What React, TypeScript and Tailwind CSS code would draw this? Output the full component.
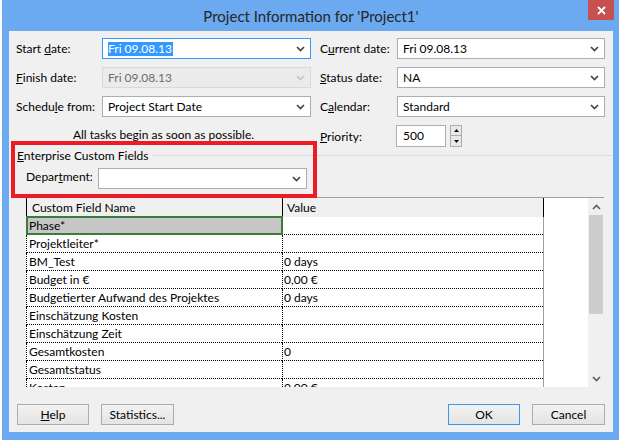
import type { ReactNode } from 'react'

const Chevron = ({ muted = false }: { muted?: boolean }) => (
  <svg width="9" height="6" viewBox="0 0 9 6" className="shrink-0">
    <path d="M1 1 L4.5 4.5 L8 1" fill="none" stroke={muted ? '#C4C4C4' : '#444444'} strokeWidth="1.7" />
  </svg>
)

const Label = ({ children, className = '' }: { children: ReactNode; className?: string }) => (
  <div className={`shrink-0 leading-[15px] ${className}`}>{children}</div>
)

const Combo = ({
  children,
  className = '',
  focused = false,
  disabled = false,
}: {
  children?: ReactNode
  className?: string
  focused?: boolean
  disabled?: boolean
}) => (
  <div
    className={`flex h-[21px] shrink-0 items-center border pl-[5px] pr-[5px] ${
      focused
        ? 'border-[#3399FF] bg-white'
        : disabled
          ? 'border-[#D9D9D9] bg-[#EBEBEB] text-[#6D6D6D]'
          : 'border-[#ABADB3] bg-white'
    } ${className}`}
  >
    <div className="min-h-[15px] flex-1 truncate leading-[15px]">{children}</div>
    <Chevron muted={disabled} />
  </div>
)

const Button = ({ children, className = '' }: { children: ReactNode; className?: string }) => (
  <div
    className={`flex h-[21px] shrink-0 items-center justify-center border bg-linear-to-b from-[#F2F2F2] to-[#E4E4E4] ${className}`}
  >
    {children}
  </div>
)

const rows = [
  { name: 'Phase*', value: '' },
  { name: 'Projektleiter*', value: '' },
  { name: 'BM_Test', value: '0 days' },
  { name: 'Budget in €', value: '0,00 €' },
  { name: 'Budgetierter Aufwand des Projektes', value: '0 days' },
  { name: 'Einschätzung Kosten', value: '' },
  { name: 'Einschätzung Zeit', value: '' },
  { name: 'Gesamtkosten', value: '0' },
  { name: 'Gesamtstatus', value: '' },
  { name: 'Kosten', value: '0,00 €' },
]

const App = () => {
  return (
    <div className="h-[443px] w-[621px] overflow-hidden bg-white font-['Lato'] text-[12px] text-black">
      <div className="ml-[2px] flex h-[440px] w-[617px] flex-col bg-[#6BA9F0] pl-[7px] pr-[6px] pb-[8px]">
        {/* Title bar */}
        <div className="relative flex h-[31px] shrink-0 items-center justify-center pt-px text-[15px] text-[#262626]">
          Project Information for 'Project1'
          <div className="absolute right-[-1px] top-0 flex h-[20px] w-[26px] items-center justify-center bg-[#C75050]">
            <svg width="9" height="9" viewBox="0 0 9 9">
              <path d="M1 1 L8 8 M8 1 L1 8" stroke="white" strokeWidth="1.8" />
            </svg>
          </div>
        </div>

        {/* Dialog body */}
        <div className="relative flex flex-1 flex-col bg-[#F0F0F0]">
          <div className="flex flex-col gap-[8px] px-[7px] pt-[7px]">
            <div className="flex h-[21px] items-center">
              <Label className="w-[86px]">
                Start <span className="underline">d</span>ate:
              </Label>
              <Combo className="w-[209px]" focused>
                <span className="ml-[-1px] inline-block bg-[#3399FF] px-px leading-[14px] text-white">Fri 09.08.13</span>
              </Combo>
              <Label className="ml-[9px] w-[77px]">
                C<span className="underline">u</span>rrent date:
              </Label>
              <Combo className="w-[208px]">Fri 09.08.13</Combo>
            </div>
            <div className="flex h-[21px] items-center">
              <Label className="w-[86px]">
                <span className="underline">F</span>inish date:
              </Label>
              <Combo className="w-[209px]" disabled>
                Fri 09.08.13
              </Combo>
              <Label className="ml-[9px] w-[77px]">
                <span className="underline">S</span>tatus date:
              </Label>
              <Combo className="w-[208px]">NA</Combo>
            </div>
            <div className="flex h-[21px] items-center">
              <Label className="w-[86px]">
                Schedu<span className="underline">l</span>e from:
              </Label>
              <Combo className="w-[209px]">Project Start Date</Combo>
              <Label className="ml-[9px] w-[77px]">
                C<span className="underline">a</span>lendar:
              </Label>
              <Combo className="w-[208px]">Standard</Combo>
            </div>
            <div className="flex h-[22px] items-center">
              <div className="w-[295px] pb-[3px] text-center">All tasks begin as soon as possible.</div>
              <Label className="ml-[9px] w-[76px]">
                <span className="underline">P</span>riority:
              </Label>
              <div className="flex h-[22px] w-[50px] items-center border border-[#ABADB3] bg-white pl-[6px]">500</div>
              <div className="ml-[4px] flex h-[22px] w-[12px] flex-col">
                <div className="flex h-[11px] items-center justify-center border border-[#ACACAC] bg-[#E9E9E9]">
                  <svg width="5" height="3" viewBox="0 0 5 3">
                    <path d="M0 3 L2.5 0 L5 3Z" fill="#111" />
                  </svg>
                </div>
                <div className="mt-[-1px] flex h-[12px] items-center justify-center border border-[#ACACAC] bg-[#E9E9E9]">
                  <svg width="5" height="3" viewBox="0 0 5 3">
                    <path d="M0 0 L2.5 3 L5 0Z" fill="#111" />
                  </svg>
                </div>
              </div>
            </div>
          </div>

          {/* Enterprise Custom Fields group */}
          <div className="flex h-[16px] items-center pl-[8px] pr-px">
            <span className="leading-[15px]">
              <span className="underline">E</span>nterprise Custom Fields
            </span>
            <div className="ml-[4px] h-0 flex-1 border-t border-[#DCDCDC]" />
          </div>
          <div className="mt-[5px] flex items-start pl-[17px]">
            <Label className="w-[72px] pt-px">
              Depar<span className="underline">t</span>ment:
            </Label>
            <Combo className="w-[209px]" />
          </div>

          {/* Custom field grid */}
          <div className="ml-[17px] mt-[8px] flex h-[190px] w-[578px] border-t border-[#A0A0A0] bg-white">
            <div className="flex w-[518px] flex-col overflow-hidden">
              <div className="flex h-[19px] shrink-0 bg-[#F0F0F0]">
                <div className="flex w-[256px] items-center border-l border-black pl-[5px]">Custom Field Name</div>
                <div className="flex flex-1 items-center border-x border-black pl-[4px]">Value</div>
              </div>
              {rows.map((row, i) => (
                <div key={row.name} className="relative flex h-[18px] shrink-0">
                  <div
                    className={`flex w-[256px] items-center border-b border-l border-dotted border-black pl-[2px] ${
                      i === 0 ? 'bg-[#C6C6C6]' : ''
                    }`}
                  >
                    {row.name}
                  </div>
                  <div className="flex flex-1 items-center border-b border-l border-dotted border-black pl-px">
                    {row.value}
                  </div>
                  <div className="w-px bg-[#A0A0A0]" />
                  {i === 0 && (
                    <div className="absolute left-0 top-[-1px] h-[19px] w-[257px] border-2 border-[#3C7B3C]" />
                  )}
                </div>
              ))}
            </div>
            <div className="flex-1" />
            <div className="flex w-[16px] flex-col bg-[#F0F0F0]">
              <div className="flex h-[17px] items-center justify-center">
                <svg width="9" height="6" viewBox="0 0 9 6">
                  <path d="M1 5 L4.5 1.5 L8 5" fill="none" stroke="#606060" strokeWidth="1.7" />
                </svg>
              </div>
              <div className="mx-px h-[99px] bg-[#CDCDCD]" />
              <div className="flex-1" />
              <div className="flex h-[17px] items-center justify-center">
                <svg width="9" height="6" viewBox="0 0 9 6">
                  <path d="M1 1 L4.5 4.5 L8 1" fill="none" stroke="#606060" strokeWidth="1.7" />
                </svg>
              </div>
            </div>
          </div>

          {/* Buttons */}
          <div className="mt-auto flex px-[8px] pb-[7px]">
            <Button className="w-[72px] border-[#ACACAC]">
              <span>
                <span className="underline">H</span>elp
              </span>
            </Button>
            <Button className="ml-[12px] w-[73px] border-[#ACACAC]">
              <span>
                Stat<span className="underline">i</span>stics...
              </span>
            </Button>
            <div className="flex-1" />
            <Button className="w-[72px] border-[#3C96E8]">OK</Button>
            <Button className="ml-[12px] w-[73px] border-[#ACACAC]">Cancel</Button>
          </div>

          {/* Annotation box */}
          <div className="absolute left-[2px] top-[110px] h-[57px] w-[306px] border-4 border-[#ED1C24]" />
        </div>
      </div>
    </div>
  )
}

export default App
